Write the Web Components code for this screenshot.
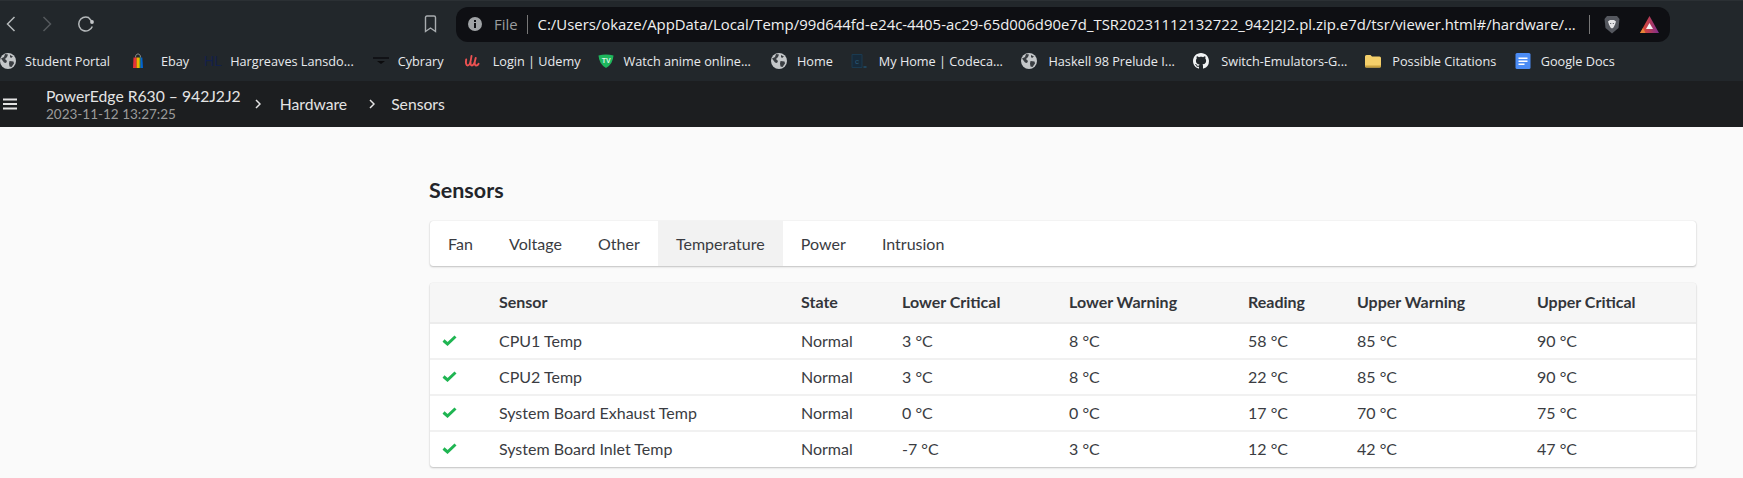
<!DOCTYPE html>
<html lang="en">
<head>
<meta charset="utf-8">
<title>Sensors</title>
<style>
    html, body { margin: 0; padding: 0; background: #fafafa; }
    body { width: 1743px; height: 478px; overflow: hidden; }
</style>
</head>
<body>
<browser-toolbar></browser-toolbar>
<bookmark-bar>
    <bookmark-item icon="globe" gap="9">Student Portal</bookmark-item>
    <bookmark-item icon="ebay" gap="15" start="20">Ebay</bookmark-item>
    <bookmark-item icon="hl" gap="9" start="16">Hargreaves Lansdo...</bookmark-item>
    <bookmark-item icon="cybrary" gap="9" start="19">Cybrary</bookmark-item>
    <bookmark-item icon="udemy" gap="13" start="20">Login | Udemy</bookmark-item>
    <bookmark-item icon="tv" gap="10" start="17">Watch anime online...</bookmark-item>
    <bookmark-item icon="globe" gap="10" start="20">Home</bookmark-item>
    <bookmark-item icon="codecademy" gap="12" start="18">My Home | Codeca...</bookmark-item>
    <bookmark-item icon="globe" gap="11" start="18.500">Haskell 98 Prelude I...</bookmark-item>
    <bookmark-item icon="github" gap="12" start="18.500">Switch-Emulators-G...</bookmark-item>
    <bookmark-item icon="folder" gap="11" start="18">Possible Citations</bookmark-item>
    <bookmark-item icon="docs" gap="10" start="18.500">Google Docs</bookmark-item>
</bookmark-bar>
<app-header></app-header>
<main-content>
    <sensor-tabs></sensor-tabs>
    <sensor-table></sensor-table>
</main-content>

<script>
const ICONS = {
    globe: `<circle cx="8" cy="8" r="8" fill="#c4c7c9"/><path d="M1 5.500 4 4l1-3 3 .5L7 4 5 6l2 2-1 2-2-.5zM9.500 8l4 .5.5 2-2.500 3.500-2-.5-.5-3zM10 2l3 1.500-2 1.500-1-1z" fill="#3a3e42"/>`,
    ebay: `<path d="M5.500 4.500C5.500 2 6.500 1 8 1s2.500 1 2.500 3.500" fill="none" stroke="#8a8a8a" stroke-width="1"/><path d="M3.500 4.500H6.500V15H3z" fill="#e53238"/><path d="M6.500 4.500H9V15H6.500z" fill="#f5af02"/><path d="M9 4.500h1.500V15H9z" fill="#86b817"/><path d="M10.500 4.500h1.800L13 15h-2.500z" fill="#0064d2"/>`,
    hl: `<text x="8" y="13" text-anchor="middle" font-family="Liberation Sans, sans-serif" font-size="14" fill="#13204a">HL</text>`,
    cybrary: `<path d="M0 5h16" stroke="#0b0b0d" stroke-width="1.400"/><path d="M4 8h8l-4 3z" fill="#0b0b0d"/>`,
    udemy: `<path d="M2.200 6.500C1.600 9.500 2 12.500 3.600 12.500 5.500 12.500 6.800 8.500 7.500 3M6.600 9.500c-.3 2.300.4 3 1.300 3 1.600 0 3-3.500 3.800-7.500M10.800 9.500c-.3 2 .4 3 1.500 3 .9 0 1.700-.6 2.300-1.700" fill="none" stroke="#ec5252" stroke-width="1.900" stroke-linecap="round"/>`,
    tv: `<path d="M.5 2.500Q8 .5 15.500 2.500 15 11 8 15 1 11 .5 2.500z" fill="#1eb75d"/><text x="8.200" y="9.800" text-anchor="middle" font-family="Liberation Sans, sans-serif" font-weight="700" font-size="7" fill="#dff5e6">TV</text>`,
    codecademy: `<path d="M1 1.500h10v13H1z" fill="#172a3a" stroke="#1a3a50"/><text x="6" y="11" text-anchor="middle" font-family="Liberation Sans, sans-serif" font-size="8" fill="#2a5a78">c</text><path d="M12.500 14h3" stroke="#1f5c80" stroke-width="1.200"/>`,
    github: `<path fill="#f1f3f4" d="M8 0C3.580 0 0 3.580 0 8c0 3.540 2.290 6.530 5.470 7.590.4.070.55-.17.55-.38 0-.19-.01-.82-.01-1.490-2.010.37-2.530-.49-2.690-.94-.09-.23-.48-.94-.82-1.130-.28-.15-.68-.52-.01-.53.63-.01 1.080.58 1.230.82.72 1.210 1.870.87 2.330.66.070-.52.28-.87.51-1.070-1.780-.2-3.640-.89-3.640-3.950 0-.87.31-1.590.82-2.150-.08-.2-.36-1.020.08-2.120 0 0 .67-.21 2.200.82.64-.18 1.320-.27 2-.27.68 0 1.360.09 2 .27 1.530-1.040 2.200-.82 2.200-.82.44 1.100.16 1.920.08 2.120.51.56.82 1.270.82 2.150 0 3.070-1.870 3.750-3.650 3.950.29.25.54.73.54 1.480 0 1.070-.01 1.930-.01 2.200 0 .21.15.46.55.38A8.013 8.013 0 0016 8c0-4.420-3.580-8-8-8z"/>`,
    folder: `<path d="M0 3.500A1.500 1.500 0 0 1 1.500 2h4L7 3.500h7.500A1.500 1.500 0 0 1 16 5v8a1.500 1.500 0 0 1-1.500 1.500h-13A1.500 1.500 0 0 1 0 13z" fill="#f4cf6a"/><path d="M0 13a1.500 1.500 0 0 0 1.500 1.500h13A1.500 1.500 0 0 0 16 13v-.6H0z" fill="#c9a13f"/>`,
    docs: `<rect x="0.500" width="15" height="16" rx="1.500" fill="#4b8cf5"/><path d="M3.500 4.500h9v1.500h-9zM3.500 7.500h9v1.500h-9zM3.500 10.500h6v1.500h-6z" fill="#fff"/>`
};

class BrowserToolbar extends HTMLElement {
    connectedCallback() {
        this.attachShadow({ mode: 'open' });
        this.shadowRoot.innerHTML = `
            <style>
                :host {
                    display: flex;
                    align-items: center;
                    height: 41px;
                    padding-top: 6px;
                    box-sizing: border-box;
                    background: #22272b;
                    border-top: 1px solid #2b3034;
                    font: 14.900px "Open Sans", sans-serif;
                }
                svg { display: block; flex: none; }
                .nav { display: flex; align-items: center; height: 35px; }
                .back { margin-left: 5px; }
                .forward { margin-left: 24px; }
                .reload { margin-left: 24px; }
                .mark { margin-left: 329px; }
                .address {
                    margin-left: 19px;
                    width: 1214px;
                    height: 35px;
                    flex: none;
                    display: flex;
                    align-items: center;
                    box-sizing: border-box;
                    background: #0e0f13;
                    border-radius: 12px;
                    white-space: nowrap;
                }
                .info { margin-left: 12px; }
                .file { margin-left: 12px; color: #9a9c9f; }
                .sep { width: 1px; height: 19px; background: #777; flex: none; }
                .url { margin-left: 10px; color: #f0f0f0; width: 1051px; overflow: hidden; }
                .brave { margin-left: 14px; }
                .bat { margin-left: 20px; }
            </style>
            <div class="nav">
                <svg class="back" width="12" height="18" viewBox="0 0 12 18"><path d="M9.500 2 2.500 9l7 7" fill="none" stroke="#b4b8ba" stroke-width="1.500"/></svg>
                <svg class="forward" width="12" height="18" viewBox="0 0 12 18"><path d="M2.500 2l7 7-7 7" fill="none" stroke="#54585c" stroke-width="1.500"/></svg>
                <svg class="reload" width="18" height="18" viewBox="0 0 18 18"><path d="M15.300 11.500A7 7 0 1 1 11.500 2.500L15 6.500" fill="none" stroke="#b4b8ba" stroke-width="1.500"/><circle cx="15" cy="7" r="1.900" fill="#c4c7c9"/></svg>
                <svg class="mark" width="13" height="18" viewBox="0 0 13 18"><path d="M1.500 2.500Q1.500 1 3 1h7q1.500 0 1.500 1.500V16.500L6.500 13l-5 3.500z" fill="none" stroke="#a8acaf" stroke-width="1.400"/></svg>
            </div>
            <div class="address">
                <svg class="info" width="14" height="14" viewBox="0 0 14 14"><circle cx="7" cy="7" r="7" fill="#a0a3a6"/><path d="M6 6h2v5H6zM6 3h2v2H6z" fill="#0e0f13"/></svg>
                <span class="file">File</span>
                <span class="sep" style="margin-left:9px"></span>
                <span class="url">C:/Users/okaze/AppData/Local/Temp/99d644fd-e24c-4405-ac29-65d006d90e7d_TSR20231112132722_942J2J2.pl.zip.e7d/tsr/viewer.html#/hardware/...</span>
                <span class="sep"></span>
                <svg class="brave" width="16" height="19" viewBox="0 0 16 19"><path d="M3 1h10l2.500 3-1 9L8 18.500 1.500 13l-1-9z" fill="#55585f"/><path d="M4 6.500 6 5h4l2 1.500-1 3-1.500 3-1.500 1-1.500-1L5 9.500z" fill="#e6e6e8"/><path d="M6.200 8h1v1h-1zM8.800 8h1v1h-1z" fill="#55585f"/></svg>
                <svg class="bat" width="19" height="17" viewBox="0 0 19 17"><defs><linearGradient id="g" x1="0" y1="0" x2="1" y2="0"><stop offset="0" stop-color="#ef4b23"/><stop offset="1" stop-color="#7c2d8e"/></linearGradient></defs><path d="M9.500 0 19 17H0z" fill="url(#g)"/><path d="M9.500 7 13 13H6z" fill="#f4f4f4"/><path d="M0 17l3-5 2.500 5z" fill="#e8a03a" opacity=".7"/></svg>
            </div>
        `;
    }
}

class BookmarkBar extends HTMLElement {
    connectedCallback() {
        this.attachShadow({ mode: 'open' });
        this.shadowRoot.innerHTML = `
            <style>
                :host {
                    display: flex;
                    align-items: center;
                    height: 40px;
                    background: #22272b;
                    color: #e8eaed;
                    font: 12.700px "Open Sans", sans-serif;
                    white-space: nowrap;
                }
            </style>
            <slot></slot>
        `;
    }
}

class BookmarkItem extends HTMLElement {
    connectedCallback() {
        const gap = this.getAttribute('gap') || 8;
        const start = this.getAttribute('start') || 0;
        this.attachShadow({ mode: 'open' });
        this.shadowRoot.innerHTML = `
            <style>
                :host {
                    display: flex;
                    align-items: center;
                    margin-left: ${start}px;
                }
                svg { display: block; flex: none; overflow: visible; }
                span { margin-left: ${gap}px; }
            </style>
            <svg width="16" height="16" viewBox="0 0 16 16">${ICONS[this.getAttribute('icon')]}</svg>
            <span><slot></slot></span>
        `;
    }
}

class AppHeader extends HTMLElement {
    connectedCallback() {
        this.attachShadow({ mode: 'open' });
        this.shadowRoot.innerHTML = `
            <style>
                :host {
                    display: flex;
                    align-items: center;
                    height: 46px;
                    background: #1c1e20;
                    color: #e4e4e4;
                    font: 15.700px Lato, sans-serif;
                    white-space: nowrap;
                }
                .menu { margin-left: 3px; flex: none; }
                .title { margin-left: 29px; display: flex; flex-direction: column; }
                .name { line-height: 19px; }
                .date { line-height: 16px; font-size: 13.500px; color: #9b9b9b; }
                .chev { flex: none; }
                .crumb { position: relative; top: -1px; }
            </style>
            <svg class="menu" width="14" height="12" viewBox="0 0 14 12"><path d="M0 1.500h14M0 6h14M0 10.500h14" stroke="#e4e4e4" stroke-width="2"/></svg>
            <div class="title">
                <span class="name">PowerEdge R630 – 942J2J2</span>
                <span class="date">2023-11-12 13:27:25</span>
            </div>
            <svg class="chev" style="margin:0 19px 0 14px" width="6" height="10" viewBox="0 0 6 10"><path d="M1 1l4 4-4 4" fill="none" stroke="#e4e4e4" stroke-width="1.500"/></svg>
            <span>Hardware</span>
            <svg class="chev" style="margin:0 16px 0 22px" width="6" height="10" viewBox="0 0 6 10"><path d="M1 1l4 4-4 4" fill="none" stroke="#e4e4e4" stroke-width="1.500"/></svg>
            <span>Sensors</span>
        `;
    }
}

class MainContent extends HTMLElement {
    connectedCallback() {
        this.attachShadow({ mode: 'open' });
        this.shadowRoot.innerHTML = `
            <style>
                :host {
                    display: block;
                    height: 350px;
                    padding: 50px 47px 0 430px;
                    box-sizing: border-box;
                    background: #fafafa;
                    color: #333;
                    font: 16px Lato, sans-serif;
                }
                h1 {
                    margin: 0 0 18px -1px;
                    font: 700 21.500px/26px Lato, sans-serif;
                    color: #23252a;
                }
                .stack { display: flex; flex-direction: column; gap: 17px; }
            </style>
            <h1>Sensors</h1>
            <div class="stack"><slot></slot></div>
        `;
    }
}

class SensorTabs extends HTMLElement {
    connectedCallback() {
        const tabs = ['Fan', 'Voltage', 'Other', 'Temperature', 'Power', 'Intrusion'];
        this.attachShadow({ mode: 'open' });
        this.shadowRoot.innerHTML = `
            <style>
                :host {
                    display: flex;
                    height: 45px;
                    box-sizing: border-box;
                    background: #fff;
                    border-radius: 3px;
                    overflow: hidden;
                    box-shadow: 0 1px 2px rgba(0,0,0,.22), 0 0 1px rgba(0,0,0,.18);
                }
                a {
                    display: flex;
                    align-items: center;
                    padding: 0 18.100px;
                    color: #3a3c42;
                }
                a.on { background: #f2f2f2; }
            </style>
            ${tabs.map(t => `<a class="${t === 'Temperature' ? 'on' : ''}">${t}</a>`).join('')}
        `;
    }
}

class SensorTable extends HTMLElement {
    connectedCallback() {
        const cols = [69, 302, 101, 167, 179, 109, 180, 159];
        const head = ['', 'Sensor', 'State', 'Lower Critical', 'Lower Warning', 'Reading', 'Upper Warning', 'Upper Critical'];
        const rows = [
            ['CPU1 Temp', 'Normal', '3 °C', '8 °C', '58 °C', '85 °C', '90 °C'],
            ['CPU2 Temp', 'Normal', '3 °C', '8 °C', '22 °C', '85 °C', '90 °C'],
            ['System Board Exhaust Temp', 'Normal', '0 °C', '0 °C', '17 °C', '70 °C', '75 °C'],
            ['System Board Inlet Temp', 'Normal', '-7 °C', '3 °C', '12 °C', '42 °C', '47 °C']
        ];
        const check = `<svg width="15" height="11" viewBox="0 0 15 11"><path d="M1.500 5.500 5.500 9 13.500 1.500" fill="none" stroke="#1fb552" stroke-width="3"/></svg>`;
        this.attachShadow({ mode: 'open' });
        this.shadowRoot.innerHTML = `
            <style>
                :host {
                    display: block;
                    background: #fff;
                    border-radius: 3px;
                    overflow: hidden;
                    box-shadow: 0 1px 2px rgba(0,0,0,.22), 0 0 1px rgba(0,0,0,.18);
                }
                table { width: 100%; table-layout: fixed; border-collapse: collapse; }
                th, td { padding: 0 0 2px; text-align: left; font-size: 16px; }
                th {
                    height: 37px;
                    font-weight: 700;
                    color: #33353a;
                    background: #f6f6f6;
                    border-bottom: 2px solid #ececec;
                }
                td { height: 32px; color: #3a3c42; border-bottom: 2px solid #f1f1f1; }
                tr:last-child td { border-bottom: 0; height: 33px; }
                td:first-child { padding-left: 12px; }
                svg { display: block; }
            </style>
            <table>
                <colgroup>${cols.map(w => `<col style="width:${w}px">`).join('')}</colgroup>
                <thead><tr>${head.map(h => `<th>${h}</th>`).join('')}</tr></thead>
                <tbody>
                    ${rows.map(r => `<tr><td>${check}</td>${r.map(c => `<td>${c}</td>`).join('')}</tr>`).join('')}
                </tbody>
            </table>
        `;
    }
}

customElements.define('browser-toolbar', BrowserToolbar);
customElements.define('bookmark-bar', BookmarkBar);
customElements.define('bookmark-item', BookmarkItem);
customElements.define('app-header', AppHeader);
customElements.define('main-content', MainContent);
customElements.define('sensor-tabs', SensorTabs);
customElements.define('sensor-table', SensorTable);
</script>
</body>
</html>
